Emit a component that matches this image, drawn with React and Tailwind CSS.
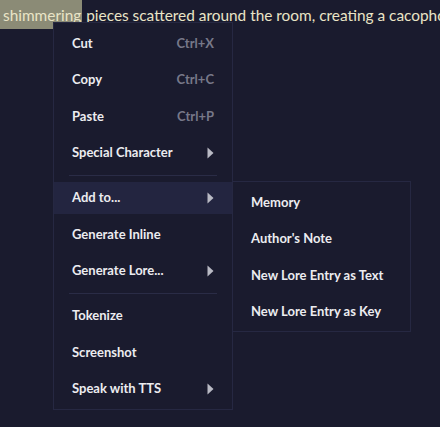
import React from "react";

const font = { fontFamily: "Lato, 'Noto Sans', sans-serif" };

function Arrow() {
  return (
    <svg width="7" height="12" viewBox="0 0 7 12" className="shrink-0">
      <polygon points="0.5,0.5 6.5,6 0.5,11.5" fill="#b9bac4" />
    </svg>
  );
}

function Item({ label, shortcut, sub, active }) {
  return (
    <div className="h-[36.5px] py-[2.25px]">
      <div
        className={`h-8 flex items-center justify-between px-[18px] ${
          active ? "bg-[#232540]" : ""
        }`}
      >
        <span className="text-[13px] font-bold text-[#ececf0]">{label}</span>
        {shortcut && <span className="text-[13px] font-bold text-[#777889]">{shortcut}</span>}
        {sub && <Arrow />}
      </div>
    </div>
  );
}

function Sep() {
  return (
    <div className="h-[8.5px] flex items-center px-[15px]">
      <div className="h-px w-full bg-[#2a2c46]" />
    </div>
  );
}

export default function App() {
  return (
    <div className="relative w-[440px] h-[427px] bg-[#1a1b2e] overflow-hidden" style={font}>
      <div className="whitespace-nowrap overflow-hidden h-[29px] leading-[31px] text-[15.4px] text-[#e9e4c6]">
        <span className="bg-[#8b8b76] pl-[3px] pr-px inline-block">shimmering</span> pieces scattered around the room, creating a cacopho
      </div>

      <div className="absolute left-[53px] top-[22px] w-[180px] bg-[#1a1b2e] border border-[#262842] pt-[2px] pb-[2px]">
        <Item label="Cut" shortcut="Ctrl+X" />
        <Item label="Copy" shortcut="Ctrl+C" />
        <Item label="Paste" shortcut="Ctrl+P" />
        <Item label="Special Character" sub />
        <Sep />
        <Item label="Add to..." sub active />
        <Item label="Generate Inline" />
        <Item label="Generate Lore..." sub />
        <Sep />
        <Item label="Tokenize" />
        <Item label="Screenshot" />
        <Item label="Speak with TTS" sub />
      </div>

      <div className="absolute left-[232px] top-[181px] w-[179px] bg-[#1a1b2e] border border-[#262842] pt-[2px] pb-[1px]">
        <Item label="Memory" />
        <Item label="Author's Note" />
        <Item label="New Lore Entry as Text" />
        <Item label="New Lore Entry as Key" />
      </div>
    </div>
  );
}
